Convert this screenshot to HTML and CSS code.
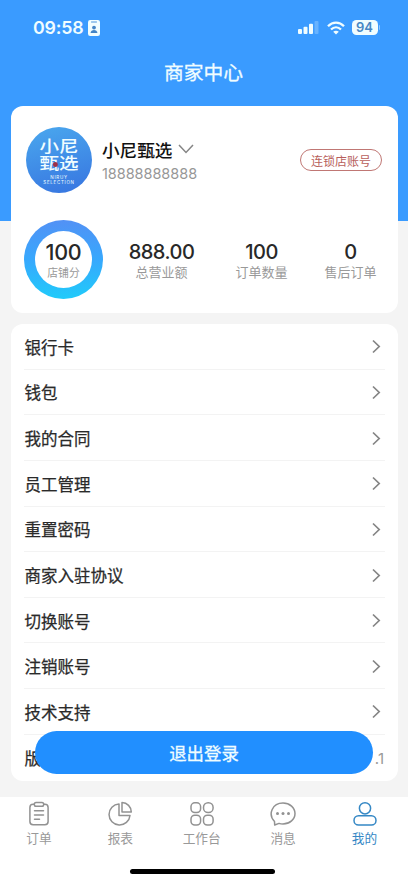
FILE: index.html
```html
<!DOCTYPE html>
<html lang="zh-CN">
<head>
<meta charset="utf-8">
<meta name="viewport" content="width=device-width, initial-scale=1">
<title>商家中心</title>
<link rel="stylesheet" href="styles.css">
</head>
<body>
<div class="screen">
  <header class="status">
    <div class="clock"><span class="time">09:58</span>
      <svg width="12" height="16" viewBox="0 0 12 16"><rect width="12" height="16" rx="2.2" fill="#f0fdff"/><path d="M3.5 2h5" stroke="#4a94dc" stroke-width="1" stroke-linecap="round"/><circle cx="6" cy="7.6" r="1.9" fill="#4284c6"/><path d="M2.6 13c0-4 6.8-4 6.8 0z" fill="#4284c6"/></svg>
    </div>
    <div class="signals">
      <svg width="21" height="13" viewBox="0 0 21 13" fill="#f0fdff"><rect x="0" y="8" width="4" height="5" rx="1"/><rect x="5.5" y="5.7" width="4" height="7.3" rx="1"/><rect x="11" y="2.8" width="4" height="10.2" rx="1"/><rect x="16.5" y="0" width="4" height="13" rx="1" opacity=".25"/></svg>
      <svg class="wifi" width="18" height="14" viewBox="0 0 18 14" fill="none" stroke="#f0fdff" stroke-width="2.3"><path d="M1 5.2c4.7-4.8 11.3-4.8 16 0"/><path d="M4 8.5c3-2.9 7-2.9 10 0"/><path d="M9 13.6L6.2 10.8c1.6-1.5 4-1.5 5.6 0z" fill="#f0fdff" stroke="none"/></svg>
      <span class="battery">94</span><i class="nub"></i>
    </div>
  </header>
  <h1 class="title">商家中心</h1>

  <main class="content">
    <section class="card profile">
      <div class="account">
        <div class="avatar">
          <span class="logo">小尼</span>
          <span class="logo">甄选<i class="seal"></i></span>
          <span class="latin">NIRUY</span>
          <span class="latin wide">SELECTION</span>
        </div>
        <div class="who">
          <div class="name">小尼甄选<svg width="16" height="10" viewBox="0 0 16 10" fill="none" stroke="#858585" stroke-width="1.5"><path d="M1 1l7 7.4L15 1"/></svg></div>
          <div class="phone">18888888888</div>
        </div>
        <span class="tag">连锁店账号</span>
      </div>
      <div class="stats">
        <div class="ring"><div class="ring-in"><b>100</b><span>店铺分</span></div></div>
        <div class="stat revenue"><b>888.00</b><span>总营业额</span></div>
        <div class="stat orders"><b>100</b><span>订单数量</span></div>
        <div class="stat after"><b>0</b><span>售后订单</span></div>
      </div>
    </section>

    <ul class="card menu">
      <li>银行卡<svg class="go" viewBox="0 0 9 15"><path d="M1 1.500l6.200 6L1 13.500"/></svg></li>
      <li>钱包<svg class="go" viewBox="0 0 9 15"><path d="M1 1.500l6.200 6L1 13.500"/></svg></li>
      <li>我的合同<svg class="go" viewBox="0 0 9 15"><path d="M1 1.500l6.200 6L1 13.500"/></svg></li>
      <li>员工管理<svg class="go" viewBox="0 0 9 15"><path d="M1 1.500l6.200 6L1 13.500"/></svg></li>
      <li>重置密码<svg class="go" viewBox="0 0 9 15"><path d="M1 1.500l6.200 6L1 13.500"/></svg></li>
      <li>商家入驻协议<svg class="go" viewBox="0 0 9 15"><path d="M1 1.500l6.200 6L1 13.500"/></svg></li>
      <li>切换账号<svg class="go" viewBox="0 0 9 15"><path d="M1 1.500l6.200 6L1 13.500"/></svg></li>
      <li>注销账号<svg class="go" viewBox="0 0 9 15"><path d="M1 1.500l6.200 6L1 13.500"/></svg></li>
      <li>技术支持<svg class="go" viewBox="0 0 9 15"><path d="M1 1.500l6.200 6L1 13.500"/></svg></li>
      <li>版<span class="version">.1</span></li>
    </ul>
  </main>

  <button class="logout">退出登录</button>

  <nav class="tabs">
    <a><svg viewBox="0 0 26 26"><rect x="3.9" y="3.2" width="18.2" height="20.6" rx="3.2"/><rect x="8.3" y="1.5" width="9.4" height="3.8" rx="1.8" fill="#fff"/><path d="M8.5 9.8h9M8.5 14h9M8.5 18.2h5"/></svg>订单</a>
    <a><svg viewBox="0 0 26 26"><path d="M12 3A10.5 10.5 0 1 0 23 14.5H12z"/><path d="M15 1.5V11h9.3A9.6 9.6 0 0 0 15 1.5z"/></svg>报表</a>
    <a><svg viewBox="0 0 26 26"><rect x="2" y="1.8" width="9.6" height="9.8" rx="3.8"/><rect x="14.5" y="1.8" width="9.6" height="9.8" rx="4.6"/><rect x="2" y="14.2" width="9.6" height="9.8" rx="3.8"/><rect x="14.5" y="14.2" width="9.6" height="9.8" rx="3.8"/></svg>工作台</a>
    <a><svg viewBox="0 0 26 26"><path d="M4.500 20.500C-2.500 13 2.500 2 13 2c6.800 0 12 4.700 12 10.500S19.800 23 13 23c-1.500 0-2.800-.2-4-.6L4.700 24z"/><g fill="#929292" stroke="none"><circle cx="7.500" cy="12.600" r="1.500"/><circle cx="13" cy="12.600" r="1.500"/><circle cx="18.500" cy="12.600" r="1.500"/></g></svg>消息</a>
    <a class="on"><svg viewBox="0 0 26 26"><circle cx="13" cy="7.300" r="5.600"/><rect x="2" y="14.800" width="22" height="9.200" rx="4.600"/></svg>我的</a>
  </nav>
  <footer class="home"><i></i></footer>
</div>
</body>
</html>
```
FILE: styles.css
```css
* { box-sizing: border-box; }
body {
  margin: 0;
  font-family: "Noto Sans CJK SC", sans-serif;
  color: #2a2a2a;
}
.screen {
  position: relative;
  display: flex;
  flex-direction: column;
  width: 408px;
  height: 883px;
  overflow: hidden;
  background: linear-gradient(#3a9bff 0 220.5px, #f4f4f4 220.5px);
}
.status {
  display: flex;
  justify-content: space-between;
  align-items: center;
  height: 55px;
  padding: 0 28px 0 33px;
  color: #f0fdff;
}
.clock, .signals { display: flex; align-items: center; }
.clock { gap: 6px; }
.time {
  width: 49px;
  font: 600 17.800px/20px Inter, sans-serif;
  letter-spacing: -.2px;
}
.wifi { margin: 0 7px 0 8px; }
.battery {
  width: 26px;
  height: 15px;
  border-radius: 4.500px;
  background: #f0fdff;
  color: #4787c4;
  font: 600 13px/15px Inter, sans-serif;
  text-align: center;
}
.nub { width: 1.500px; height: 5px; margin-left: 1px; border-radius: 0 2px 2px 0; background: #8fc6fb; }
.title {
  height: 51px;
  margin: 0;
  padding-right: 1px;
  font-size: 19.800px;
  font-weight: 400;
  -webkit-text-stroke: .3px;
  line-height: 34px;
  text-align: center;
  color: #f0fdff;
}
.content { display: grid; gap: 11px; padding: 0 11px; }
.card { margin: 0; border-radius: 12px; background: #fff; }
.profile { height: 207px; padding: 21px 15px 0; }
.account { display: flex; height: 66px; }
.avatar {
  display: flex;
  flex-direction: column;
  align-items: center;
  width: 66px;
  height: 66px;
  padding-top: 10px;
  border-radius: 50%;
  background: linear-gradient(165deg, #4aa8ee, #3774e0);
  color: #f0fdff;
}
.logo { position: relative; height: 17px; font-size: 16px; font-weight: 500; line-height: 17px; transform: scaleX(1.22); }
.seal { position: absolute; left: 10.500px; top: 8px; width: 4px; height: 5px; border-radius: 2px; background: #9c3049; }
.latin { margin-top: 4px; font: 4.500px/5px Inter, sans-serif; letter-spacing: .7px; }
.wide { margin-top: 0; }
.who { flex: 1; padding: 9px 0 0 10px; }
.name { display: flex; align-items: center; gap: 6px; height: 26px; font-size: 17.600px; font-weight: 500; color: #111; }
.phone { margin-top: 2px; font: 14.500px/20px Inter, sans-serif; letter-spacing: -.05px; color: #979797; }
.tag {
  width: 82px;
  height: 22px;
  margin: 22px 1px 0 0;
  border: 1px solid #c07774;
  border-radius: 11px;
  font-size: 12px;
  line-height: 21px;
  text-align: center;
  color: #b85f5c;
}
.stats { display: flex; height: 79px; margin: 27px -15px 0 -2px; }
.ring {
  display: flex;
  width: 79px;
  height: 79px;
  padding: 11px;
  border-radius: 50%;
  background: linear-gradient(#5291f5, #37a8fd 50%, #20cbfa);
}
.ring-in { flex: 1; padding-top: 10px; border-radius: 50%; background: #fff; text-align: center; }
.stats b { display: block; font: 500 20px/23px Inter, sans-serif; letter-spacing: -.5px; color: #282828; }
.stats span { display: block; font-size: 13px; line-height: 18px; white-space: nowrap; color: #999; }
.stats .ring-in b { font-size: 21.500px; letter-spacing: -.3px; }
.stats .ring-in span { font-size: 10.800px; line-height: 16px; }
.stat { padding-top: 21px; text-align: center; }
.stat span { margin-top: -1px; }
.revenue { width: 117px; }
.orders { width: 83px; }
.after { width: 95px; }
.menu { height: 456.500px; padding: 0 13px; list-style: none; }
.menu li {
  display: flex;
  justify-content: space-between;
  align-items: center;
  height: 45.650px;
  padding: 1px 0 0 .5px;
  border-bottom: 1px solid #f3f3f3;
  font-size: 16.500px;
  font-weight: 400;
  -webkit-text-stroke: .25px;
}
.menu li:last-child { border: 0; }
.go { width: 9px; height: 15px; margin: 0 4px 0 0; fill: none; stroke: #858585; stroke-width: 1.700; }
.version { padding-right: 1px; font: 15px Inter, sans-serif; color: #999; -webkit-text-stroke: 0; }
.logout {
  position: absolute;
  left: 35px;
  top: 731px;
  width: 338px;
  height: 43px;
  padding: 0;
  border: 0;
  border-radius: 22px;
  background: #218fff;
  font: 400 17.400px/43px "Noto Sans CJK SC", sans-serif;
  -webkit-text-stroke: .3px;
  color: #f0fdff;
}
.tabs {
  display: grid;
  grid-template-columns: repeat(5, 81.400px);
  height: 61px;
  margin-top: auto;
  padding: 4px 0 0;
  background: #fff;
}
.tabs a {
  display: flex;
  flex-direction: column;
  align-items: center;
  margin-left: -3.500px;
  font-size: 12.700px;
  line-height: 20px;
  color: #999;
}
.tabs svg { width: 26px; height: 26px; margin-bottom: 1px; fill: none; stroke: #929292; stroke-width: 1.500; stroke-linecap: round; stroke-linejoin: round; }
.tabs .on { color: #3588c5; }
.tabs .on svg { stroke: #3588c5; }
.home { display: flex; justify-content: center; height: 25.500px; padding: 11px 3px 0 0; background: #fff; }
.home i { width: 145px; height: 5px; border-radius: 3px; background: #000; }
```
